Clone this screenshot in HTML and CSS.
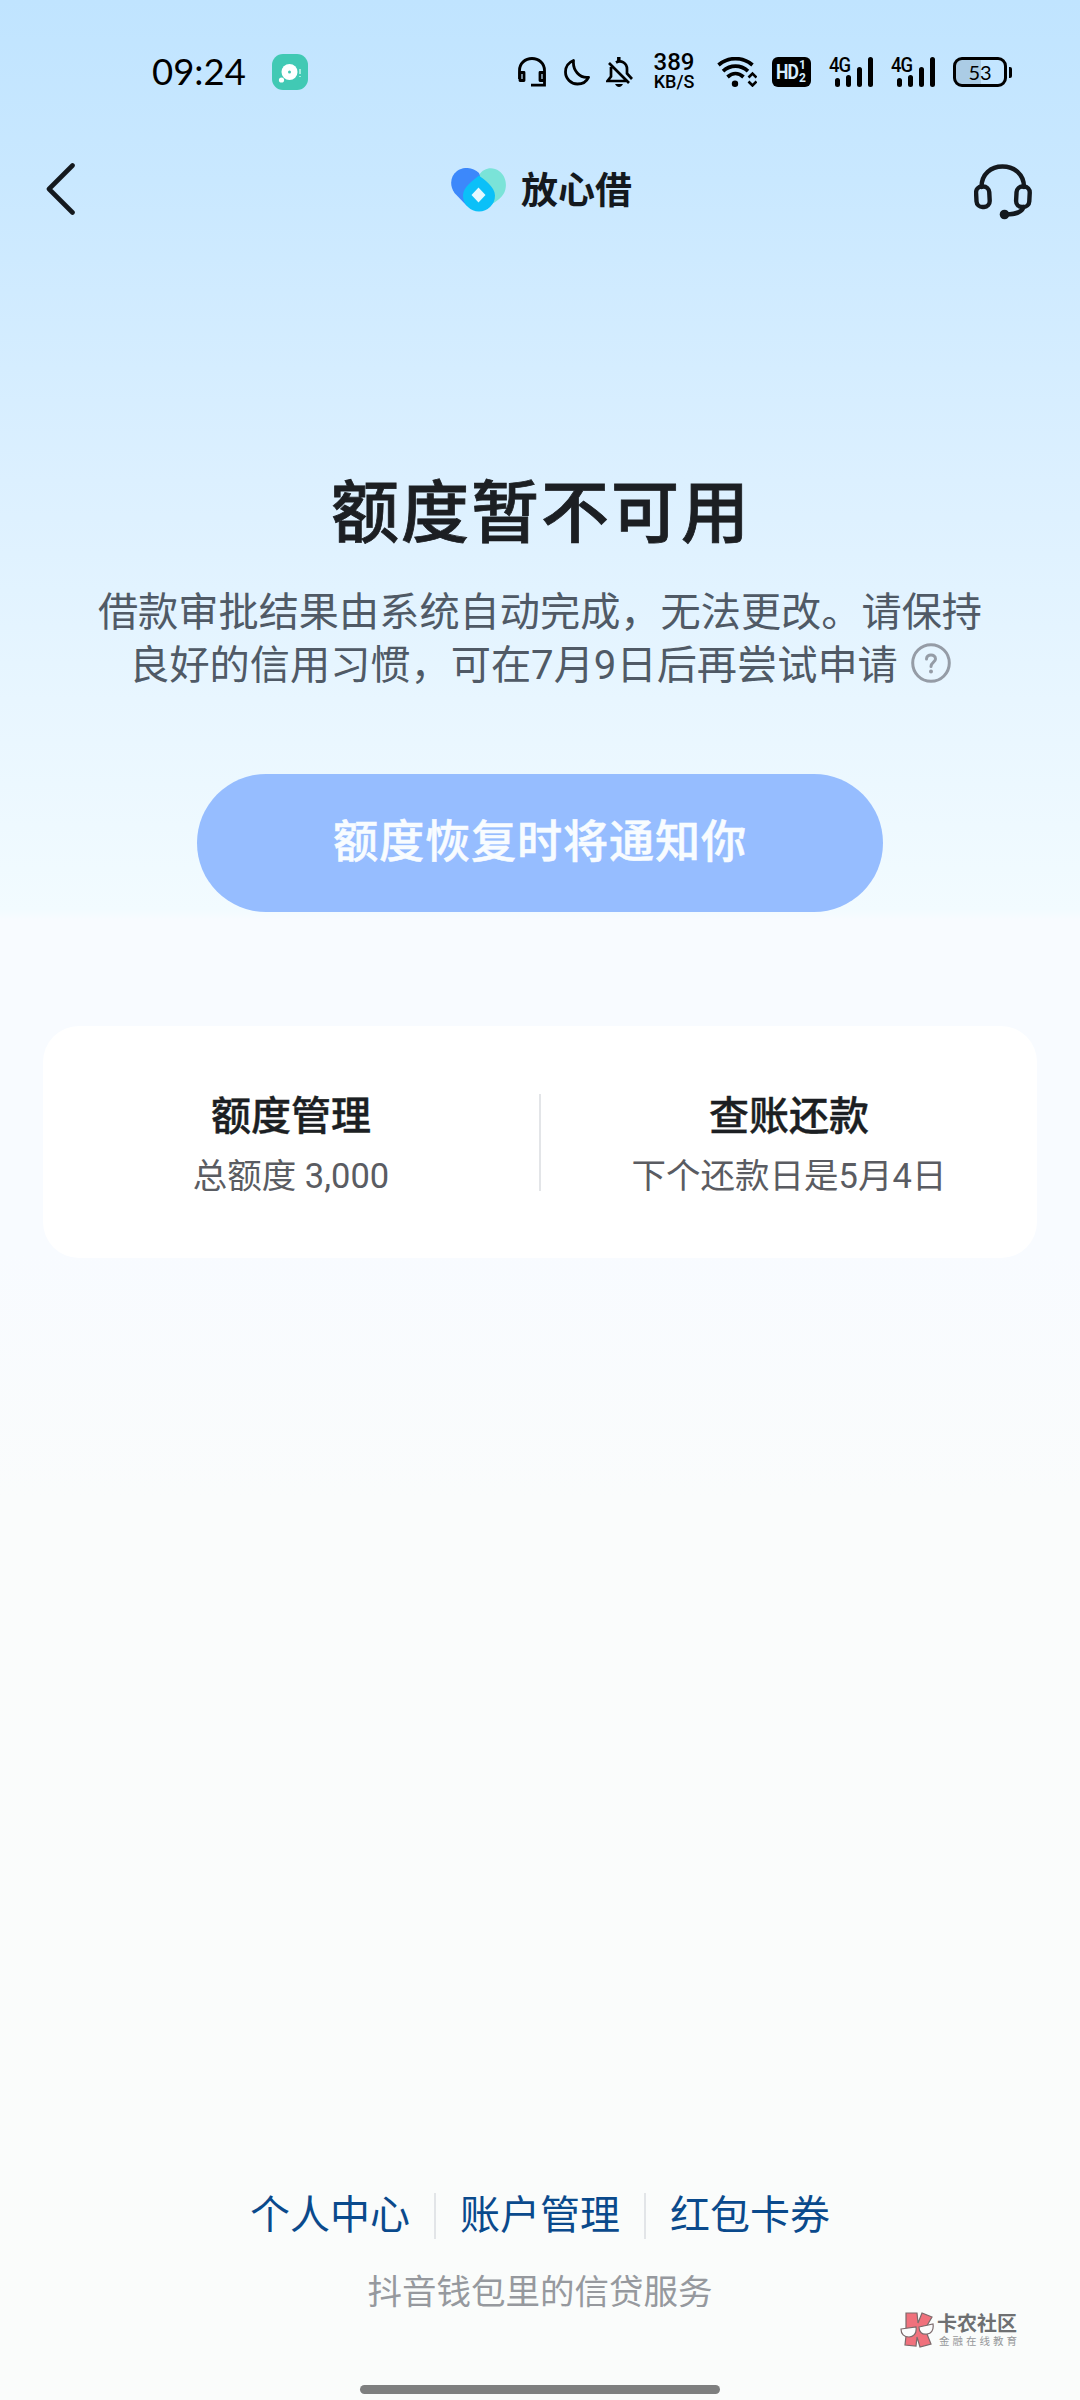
FILE: index.html
```html
<!DOCTYPE html>
<html lang="zh-CN">
<head>
<meta charset="utf-8">
<title>放心借</title>
<link rel="stylesheet" href="styles.css">
</head>
<body>
<div class="screen">
  <header class="status">
    <div class="status-left">
      <span class="time">09:24</span>
      <svg class="app-badge" width="36" height="36" viewBox="0 0 36 36">
        <rect width="36" height="36" rx="11" fill="#41c9b4"/>
        <circle cx="17.5" cy="18" r="8" fill="#fff"/>
        <circle cx="9.5" cy="26" r="2.6" fill="#fff"/>
        <circle cx="17.5" cy="18" r="1.5" fill="#41c9b4"/>
        <path d="M28 15v5M28 22v1" stroke="#a5eadd" stroke-width="2"/>
      </svg>
    </div>
    <div class="status-right">
      <svg width="28" height="30" viewBox="0 0 28 30" fill="none" stroke="#000" stroke-width="2.800">
        <path d="M1.500 22V13.500C1.500 6.500 7 1.500 14 1.500S26.500 6.500 26.500 13.500V28.200H13"/>
        <path d="M2 15.500H6V23.500H2zM22 15.500H26V23.500H22z" stroke-linejoin="round"/>
      </svg>
      <svg class="moon" width="26" height="28" viewBox="0 0 26 28" fill="none" stroke="#000" stroke-width="2.800" stroke-linejoin="round">
        <path d="M9.500 2.500C4.500 4.500 1.500 8.800 1.500 14A12 12 0 0 0 13.500 26C18.200 26 22.500 23.500 24.500 19.300C15.500 20.300 8.500 12.500 9.500 2.500z"/>
      </svg>
      <svg class="bell" width="27" height="30" viewBox="0 0 27 30" fill="none" stroke="#000" stroke-width="2.700">
        <path d="M3 6L23 26M10 5.500C15 2.500 21 6 21 12V16.500L26 22M5 10V19.500L1.500 24H20"/>
        <path d="M12.800 0V4" stroke-width="3.500"/>
        <path d="M9 27H17C16 29 14.500 30 13 30S10 29 9 27z" fill="#000" stroke="none"/>
      </svg>
      <div class="speed"><span class="speed-num">389</span><span class="speed-unit">KB/S</span></div>
      <svg class="wifi" width="40" height="30" viewBox="0 0 40 30" fill="none" stroke="#000" stroke-width="3.700">
        <path d="M1.500 8C11.500-.5 25.500-.5 35.500 8M6 14.200C13.500 7.500 23.500 7.500 31 14.200M10.500 20C15.500 15.500 21.500 15.500 26.500 20"/>
        <circle cx="18" cy="26.800" r="3.200" fill="#000" stroke="none"/>
        <path d="M31.500 20.500L35.500 16.500L39.500 20.500M31.500 24.500L35.500 28.500L39.500 24.500" stroke-width="2.600"/>
      </svg>
      <div class="hd"><span class="hd-text">HD</span><span class="hd-nums"><span>1</span><span>2</span></span></div>
      <div class="signal">
        <span class="net">4G</span>
        <svg width="39" height="30" viewBox="0 0 39 30"><path d="M3.500 23.500V27.500M14.500 20.500V27.500M25.500 12.500V27.500M36.500 2.500V27.500" stroke="#000" stroke-width="5" stroke-linecap="round"/></svg>
      </div>
      <div class="signal">
        <span class="net">4G</span>
        <svg width="39" height="30" viewBox="0 0 39 30"><path d="M3.500 23.500V27.500M14.500 20.500V27.500M25.500 12.500V27.500M36.500 2.500V27.500" stroke="#000" stroke-width="5" stroke-linecap="round"/></svg>
      </div>
      <div class="battery"><span class="battery-body">53</span><span class="battery-tip"></span></div>
    </div>
  </header>

  <nav class="nav">
    <svg width="30" height="54" viewBox="0 0 30 54" fill="none" stroke="#14191e" stroke-width="4.600" stroke-linecap="round" stroke-linejoin="round"><path d="M26.500 2.500L3 26L26.500 49.500"/></svg>
    <div class="brand">
      <svg width="56" height="44" viewBox="0 0 56 44">
        <path d="M28 7C33-.8 42-1.500 48 3C55 8 57 18 52.500 26C48 33 40 37 28 41z" fill="#7ae3d8"/>
        <path d="M3.500 25C-1.500 18-1 8 6 3C13-2 22-.5 28 5L29 8V40L16 38z" fill="#3c88fb"/>
        <path d="M28 7.500C33 11.500 44 19 44 27.500A16 16 0 0 1 12 27.500C12 19 22 12.500 28 7.500z" fill="#0bc0f8"/>
        <path d="M27.500 19.500L34.500 27L27.500 34.500L20.500 27z" fill="#e5f8ff"/>
      </svg>
      <span class="brand-name">放心借</span>
    </div>
    <svg width="58" height="56" viewBox="0 0 58 56" fill="none" stroke="#14191e" stroke-width="4.400" stroke-linecap="round">
      <path d="M7.500 23C7.500 10 17 2.500 28.500 2.500S50 10 50 23M49.500 43C48 48.500 42 50 32 50.500"/>
      <rect x="2.300" y="22.500" width="13.200" height="20.500" rx="6" transform="rotate(-3 9 33)"/>
      <rect x="42.300" y="22.500" width="13.200" height="20.500" rx="6" transform="rotate(3 49 33)"/>
      <circle cx="30.500" cy="50.500" r="4.800" fill="#14191e" stroke="none"/>
    </svg>
  </nav>

  <main class="main">
    <h1 class="title">额度暂不可用</h1>
    <p class="desc">借款审批结果由系统自动完成，无法更改。请保持<br>良好的信用习惯，可在7月9日后再尝试申请<svg class="help" width="40" height="40" viewBox="0 0 40 40" fill="none" stroke="#959ca6" stroke-width="3"><circle cx="20" cy="20" r="18.300"/><path d="M15.500 16C15.500 10.500 24.500 10.500 24.500 16C24.500 19 20 19.500 20 23.500" stroke-linecap="round"/><circle cx="20" cy="28.500" r="2" fill="#959ca6" stroke="none"/></svg></p>
    <button class="notify">额度恢复时将通知你</button>
    <section class="card">
      <div class="cell"><h2 class="cell-title">额度管理</h2><p class="cell-sub">总额度 3,000</p></div>
      <div class="card-line"></div>
      <div class="cell"><h2 class="cell-title">查账还款</h2><p class="cell-sub">下个还款日是5月4日</p></div>
    </section>
  </main>

  <footer class="footer">
    <div class="links"><a>个人中心</a><i></i><a>账户管理</a><i></i><a>红包卡券</a></div>
    <p class="note">抖音钱包里的信贷服务</p>
    <div class="home-bar"></div>
  </footer>

  <div class="watermark">
    <svg width="34" height="36" viewBox="0 0 34 36" stroke="#7c6a6c" stroke-width="1.200">
      <path d="M6 1L17 1L18 11L22 1L32 5L25 17L31 32L20 35L17 25L16 34L5 33L6 24z" fill="#f0717c"/>
      <path d="M1 17L16 15C17 22 13 25 9 25C4 25 1 22 1 17zM19 15L33 12C34 18 31 22 27 22C22 23 19 20 19 15z" fill="#fbfcfc"/>
    </svg>
    <div class="wm-text"><span class="wm-name">卡农社区</span><span class="wm-sub">金融在线教育</span></div>
  </div>
</div>
</body>
</html>
```
FILE: styles.css
```css
* { box-sizing: border-box; margin: 0; padding: 0; }

body {
  font-family: Roboto, "Noto Sans CJK SC", sans-serif;
  color: #1c1f23;
}

.screen {
  position: relative;
  display: flex;
  flex-direction: column;
  width: 1080px;
  height: 2400px;
  overflow: hidden;
  background: linear-gradient(180deg, #c0e4ff 0, #c9e8ff 180px, #dcf0ff 480px, #e8f6ff 700px, #f2fbff 910px, #f8fbff 920px, #f8fbff 1250px, #fafcfc 1500px, #fafcfb 2400px);
}

.status {
  display: flex;
  justify-content: space-between;
  height: 144px;
  padding: 54px 68px 0 152px;
  color: #000;
}
.status-left, .status-right { display: flex; align-items: center; height: 36px; }
.time { width: 95px; font: 400 36.500px/34px Lato, sans-serif; white-space: nowrap; margin-top: -2px; }
.app-badge { margin-left: 25px; }
.moon { margin-left: 18px; }
.bell { margin-left: 16px; }

.speed {
  display: flex;
  flex-direction: column;
  align-items: center;
  width: 42px;
  margin-left: 20px;
  white-space: nowrap;
}
.speed-num { font: 500 24px/19px Roboto, sans-serif; }
.speed-unit { font: 500 18px/19px Roboto, sans-serif; }
.wifi { margin-left: 22px; }

.hd {
  display: flex;
  align-items: center;
  justify-content: center;
  gap: 1px;
  width: 39px;
  height: 30px;
  margin-left: 15px;
  border-radius: 6px;
  background: #000;
  color: #d5edff;
}
.hd-text { font: 700 20px/30px Roboto, sans-serif; letter-spacing: -1px; transform: scaleX(.88); transform-origin: right; margin-left: -4px; }
.hd-nums { display: flex; flex-direction: column; font: 700 12px/13px Roboto, sans-serif; }

.signal { position: relative; width: 44px; height: 30px; margin-left: 18px; }
.signal svg { display: block; margin-left: 5px; }
.net { position: absolute; top: -2px; left: 0; font: 500 20px/20px Roboto, sans-serif; letter-spacing: -1px; transform: scaleX(.92); transform-origin: left; }

.battery { display: flex; align-items: center; gap: 2px; margin-left: 18px; }
.battery-body {
  width: 54px;
  height: 30px;
  border: 3px solid #000;
  border-radius: 9px;
  background: linear-gradient(90deg, #abcce5 53%, transparent 53%);
  text-align: center;
  font: 400 20px/24px Lato, sans-serif;
}
.battery-tip { width: 3px; height: 11px; border-radius: 0 2px 2px 0; background: #000; }

.nav {
  display: grid;
  grid-template-columns: 1fr auto 1fr;
  align-items: center;
  height: 92px;
  padding: 0 48px 0 46px;
}
.nav > svg:last-child { justify-self: end; margin-top: 4px; }
.brand { display: flex; align-items: center; gap: 14px; padding-left: 5px; }
.brand-name { margin-top: -4px; font: 700 37px/44px "Noto Sans CJK SC", sans-serif; color: #14191e; }

.main { padding: 228px 43px 0; text-align: center; }
.title { font-size: 68px; line-height: 100px; font-weight: 500; letter-spacing: 2px; text-indent: 2px; -webkit-text-stroke: .8px #1c1f23; }
.desc { margin-top: 22px; font-size: 40.200px; line-height: 53px; color: #505a66; white-space: nowrap; }
.help { margin-left: 13px; vertical-align: -4px; }
.notify {
  display: block;
  width: 686px;
  height: 138px;
  margin: 82px auto 0;
  padding-bottom: 8px;
  border: 0;
  border-radius: 69px;
  background: #96bdff;
  color: #f8fcff;
  font: 500 45.200px/130px "Noto Sans CJK SC", sans-serif;
  letter-spacing: .8px;
  -webkit-text-stroke: .5px #f8fcff;
}
.card {
  display: flex;
  align-items: center;
  height: 232px;
  margin-top: 114px;
  border-radius: 36px;
  background: #fff;
}
.cell { flex: 1; padding-top: 7px; }
.cell-title { font-size: 40px; line-height: 60px; font-weight: 500; -webkit-text-stroke: .4px #1c1f23; }
.cell-sub { font-size: 34.500px; line-height: 58px; color: #5a5c62; }
.card-line { width: 2px; height: 97px; background: #e3e5e8; }

.footer { display: flex; flex-direction: column; align-items: center; margin-top: auto; }
.links { display: flex; align-items: center; gap: 24px; font-size: 40px; line-height: 60px; color: #0a4a8c; }
.links i { width: 2px; height: 46px; background: #e2e5e8; }
.note { margin-top: 20px; font-size: 34.500px; line-height: 52px; color: #96999e; }
.home-bar { width: 360px; height: 9px; margin: 67px 0 6px; border-radius: 5px; background: #7e7f7f; }

.watermark { position: absolute; left: 900px; top: 2312px; display: flex; gap: 3px; }
.wm-text { display: flex; flex-direction: column; white-space: nowrap; }
.wm-name { margin-top: 1px; font-size: 20px; line-height: 23px; font-weight: 700; color: #6e7072; }
.wm-sub { margin-left: 2px; font-size: 10.500px; line-height: 12px; letter-spacing: 3px; color: #96989a; }
```
